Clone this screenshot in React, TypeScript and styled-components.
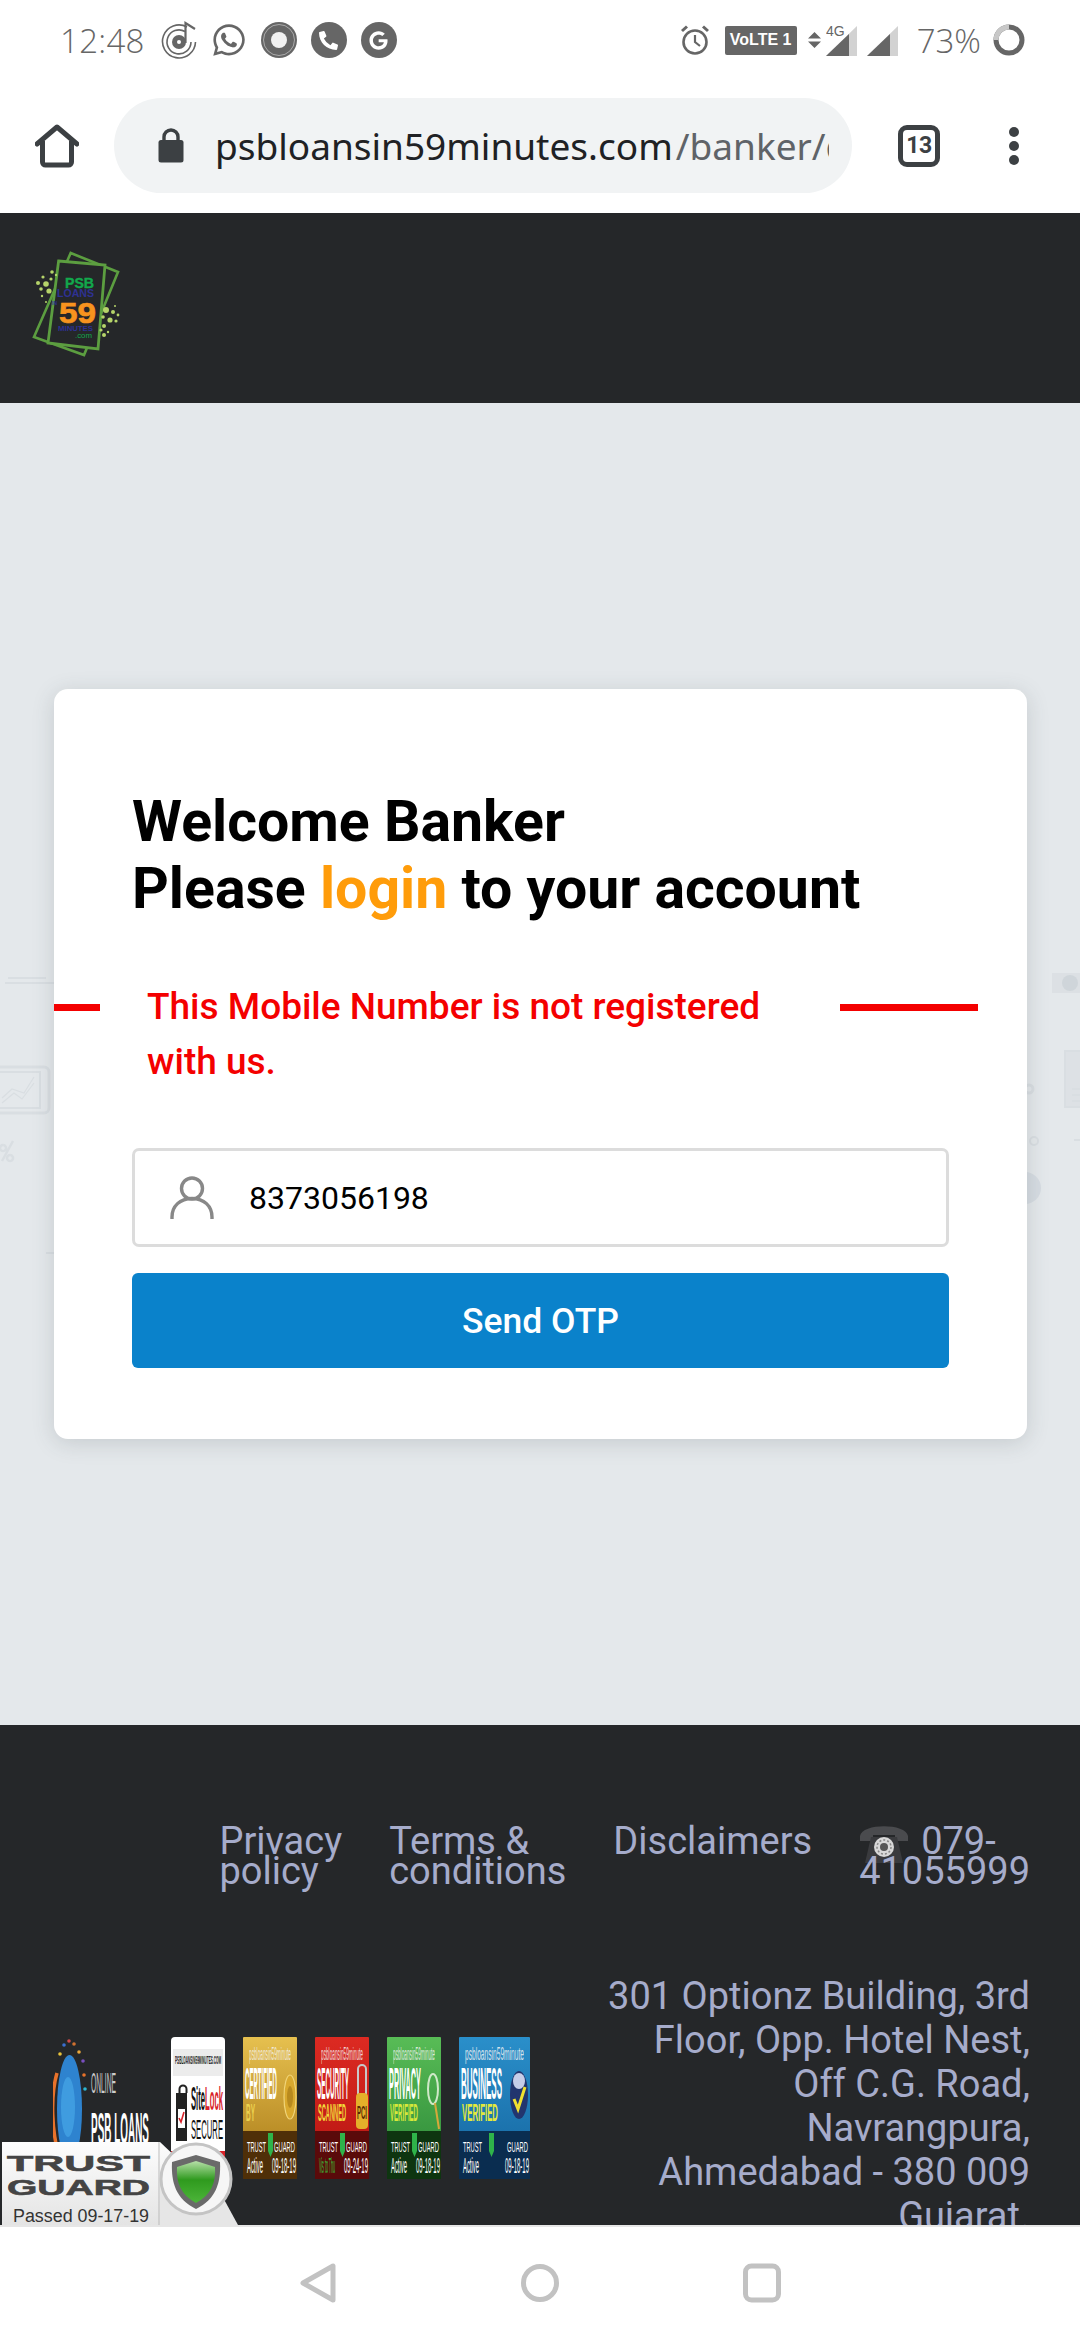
import React from 'react';
import styled, { createGlobalStyle } from 'styled-components';
import { FaWhatsapp, FaPhoneAlt, FaGoogle } from 'react-icons/fa';

const GlobalStyle = createGlobalStyle`
  html, body {
    margin: 0;
    padding: 0;
    width: 1080px;
    height: 2340px;
    overflow: hidden;
    background: #fff;
    font-family: Roboto, sans-serif;
  }
`;

const Page = styled.div`
  display: flex;
  flex-direction: column;
  width: 1080px;
  height: 2340px;
  overflow: hidden;
`;

// android status bar
const StatusBar = styled.div`
  display: flex;
  align-items: center;
  justify-content: space-between;
  height: 80px;
  padding: 0 55px 0 60px;
  color: #666;
`;

const StatusGroup = styled.div`
  display: flex;
  align-items: center;
`;

const Clock = styled.span`
  font-family: 'Open Sans', sans-serif;
  font-size: 33px;
  font-weight: 300;
  margin-right: 16px;
  letter-spacing: 0.3px;
`;

const Battery = styled.span`
  font-family: 'Open Sans', sans-serif;
  font-size: 33px;
  font-weight: 300;
  margin: 0 12px 0 18px;
`;

const NotifyIcon = styled.div`
  display: flex;
  align-items: center;
  justify-content: center;
  width: 36px;
  height: 36px;
  margin-right: 14px;
`;

const NotifyDisc = styled(NotifyIcon)`
  border-radius: 50%;
  background: #666;
  color: #fff;
`;

const VolteTag = styled.div`
  display: flex;
  align-items: center;
  justify-content: center;
  width: 72px;
  height: 29px;
  margin: 0 11px 0 15px;
  border-radius: 2px;
  background: #666;
  color: #fff;
  font-family: 'Liberation Sans', sans-serif;
  font-size: 16px;
  font-weight: 700;
  white-space: nowrap;
`;

const ArrowSlot = styled.div`
  display: flex;
  margin-right: 5px;
`;

const SignalGap = styled.span`
  width: 9px;
`;

const Toolbar = styled.div`
  display: flex;
  align-items: center;
  height: 133px;
  padding-bottom: 2px;
  box-sizing: border-box;
`;

const HomeSlot = styled.div`
  display: flex;
  justify-content: center;
  width: 114px;
`;

const Omnibox = styled.div`
  display: flex;
  align-items: center;
  width: 738px;
  height: 95px;
  padding-left: 44px;
  box-sizing: border-box;
  border-radius: 48px;
  background: #f1f3f4;
`;

const UrlText = styled.div`
  width: 614px;
  margin-left: 31px;
  overflow: hidden;
  white-space: nowrap;
  font-family: 'Noto Sans', sans-serif;
  font-size: 37px;
  color: #202124;
`;

const UrlPath = styled.span`
  padding-left: 3px;
  color: #5f6368;
`;

const TabCount = styled.div`
  display: flex;
  align-items: center;
  justify-content: center;
  width: 42px;
  height: 42px;
  margin-left: 46px;
  box-sizing: border-box;
  border: 5px solid #3c4043;
  border-radius: 9px;
  color: #3c4043;
  font-family: Roboto, sans-serif;
  font-size: 23px;
  font-weight: 700;
  letter-spacing: -0.5px;
`;

const MenuDots = styled.div`
  display: flex;
  flex-direction: column;
  gap: 4px;
  margin-left: 69px;
`;

const MenuDot = styled.span`
  width: 10px;
  height: 10px;
  border-radius: 50%;
  background: #3c4043;
`;

const SiteHeader = styled.header`
  height: 190px;
  padding: 37px 0 0 32px;
  box-sizing: border-box;
  background: #252729;
`;

const Main = styled.main`
  position: relative;
  display: flex;
  align-items: center;
  height: 1322px;
  background: #e4e8eb;
`;

const Watermark = styled.svg`
  position: absolute;
  top: 0;
  left: 0;
`;

const Card = styled.section`
  position: relative;
  width: 973px;
  height: 750px;
  margin-left: 54px;
  padding-top: 99px;
  box-sizing: border-box;
  border-radius: 14px;
  background: #fff;
  box-shadow: 0 4px 22px rgba(60, 70, 80, 0.18);
`;

const Heading = styled.h1`
  margin: 0 0 0 78px;
  color: #000;
  font-family: Roboto, sans-serif;
  font-size: 57.2px;
  font-weight: 700;
  line-height: 67px;
  letter-spacing: 0;
`;

const Accent = styled.span`
  color: #ff9c0a;
`;

const ErrorRow = styled.div`
  display: flex;
  align-items: flex-start;
  margin-top: 57px;
`;

const ErrorDash = styled.span<{ $width: number }>`
  flex: none;
  width: ${props => props.$width}px;
  height: 7px;
  margin-top: 25px;
  background: #f40000;
`;

const ErrorText = styled.div`
  flex: none;
  width: 740px;
  padding: 0 47px;
  box-sizing: border-box;
  color: #f40000;
  font-size: 37px;
  font-weight: 500;
  line-height: 55px;
`;

const FieldBox = styled.div`
  display: flex;
  align-items: center;
  height: 99px;
  margin: 59px 78px 0;
  padding-left: 35px;
  box-sizing: border-box;
  border: 3px solid #dcdcdc;
  border-radius: 7px;
`;

const FieldValue = styled.span`
  margin-left: 35px;
  color: #000;
  font-size: 32px;
`;

const SendButton = styled.button`
  display: block;
  width: 817px;
  height: 95px;
  margin: 26px 78px 0;
  border: 0;
  border-radius: 6px;
  background: #0a82cb;
  color: #fff;
  font-family: Roboto, sans-serif;
  font-size: 35.5px;
  font-weight: 500;
`;

const Footer = styled.footer`
  position: relative;
  height: 500px;
  padding: 101px 50px 0 53px;
  box-sizing: border-box;
  overflow: hidden;
  background: #252729;
  color: #a6accb;
  font-size: 38px;
`;

const FooterLinks = styled.nav`
  display: flex;
  justify-content: flex-end;
  gap: 47px;
`;

const FooterLink = styled.div`
  line-height: 30px;
  white-space: nowrap;
`;

const PhoneIcon = styled.svg`
  display: inline-block;
  vertical-align: 4px;
  margin: -20px 12px -14px 0;
`;

const FooterBottom = styled.div`
  display: flex;
  justify-content: space-between;
  align-items: flex-start;
  margin-top: 88px;
`;

const BadgeRow = styled.div`
  display: flex;
  align-items: flex-start;
  gap: 18px;
  margin-top: 63px;
`;

const Address = styled.address`
  width: 425px;
  font-style: normal;
  line-height: 44px;
  text-align: right;
`;

const TrustSeal = styled.svg`
  position: absolute;
  left: 0;
  bottom: 0;
`;

const NavBar = styled.div`
  display: flex;
  align-items: center;
  justify-content: center;
  gap: 0;
  height: 115px;
  padding-bottom: 2px;
  box-sizing: border-box;
  border-top: 2px solid #e6e6e6;
  background: #fff;
`;

const NavSlot = styled.div`
  display: flex;
  justify-content: center;
  width: 222px;
`;

const MusicIcon = () => (
  <svg width="36" height="38" viewBox="0 0 36 38" fill="none" stroke="#666">
    <path d="M26 6 A16.5 16.5 0 1 0 34.5 21" strokeWidth="1.6" />
    <path d="M24 10.5 A12 12 0 1 0 30 21" strokeWidth="1.6" />
    <circle cx="18" cy="21" r="7" fill="#666" stroke="none" />
    <circle cx="18" cy="21" r="2" fill="#fff" stroke="none" />
    <path d="M24.5 22 V2 L34 8" strokeWidth="2.2" />
  </svg>
);

const RingIcon = () => (
  <svg width="36" height="36" viewBox="0 0 36 36">
    <circle cx="18" cy="18" r="18" fill="#666" />
    <circle cx="18" cy="18" r="15.5" fill="none" stroke="#bbb" strokeWidth="0.8" />
    <circle cx="18" cy="18" r="8" fill="#f1f1f1" />
  </svg>
);

const AlarmIcon = () => (
  <svg width="30" height="32" viewBox="0 0 30 32" fill="none" stroke="#666" strokeWidth="2.6">
    <circle cx="15" cy="18" r="11.5" />
    <path d="M15 11 V18 L20 22" strokeWidth="2.2" />
    <path d="M2 7 L7 2.5 M28 7 L23 2.5" strokeWidth="3" />
  </svg>
);

const DataArrows = () => (
  <svg width="13" height="16" viewBox="0 0 13 16" fill="#666">
    <path d="M6.5 0 L13 6.5 H0 Z M0 9.5 H13 L6.5 16 Z" />
  </svg>
);

const SignalIcon = ({ label }: { label?: boolean }) => (
  <svg width="32" height="34" viewBox="0 0 32 34">
    <path d="M0 33 L31 3 V33 Z" fill="#d2d2d2" />
    <path d="M0 33 L23 11 V33 Z" fill="#666" />
    {label && (
      <text x="0" y="13" fontFamily="Liberation Sans, sans-serif" fontSize="14" fill="#666">
        4G
      </text>
    )}
  </svg>
);

const BatteryRing = () => (
  <svg width="32" height="32" viewBox="0 0 32 32" fill="none" strokeWidth="5">
    <circle cx="16" cy="16" r="13" stroke="#666" />
    <path d="M3 16 A13 13 0 0 1 16 3" stroke="#c8c8c8" />
  </svg>
);

const HomeIcon = () => (
  <svg width="44" height="44" viewBox="0 0 44 44" fill="none" stroke="#3c4043" strokeWidth="5">
    <path d="M2 20 L22 3 L42 20" strokeLinejoin="round" strokeLinecap="round" />
    <path d="M7.5 17 V38 a3 3 0 0 0 3 3 H33.5 a3 3 0 0 0 3 -3 V17" />
  </svg>
);

const LockIcon = () => (
  <svg width="26" height="35" viewBox="0 0 26 35">
    <path d="M6 14 V9 a7 7 0 0 1 14 0 V14" fill="none" stroke="#3c4043" strokeWidth="3.4" />
    <rect x="0.5" y="12" width="25" height="22.5" rx="2.5" fill="#3c4043" />
  </svg>
);

const UserIcon = () => (
  <svg width="44" height="43" viewBox="0 0 44 43" fill="none" stroke="#888" strokeWidth="3.4">
    <circle cx="22" cy="12.5" r="10.5" />
    <path d="M2 43 V41 C2 30 10 22.5 22 22.5 C34 22.5 42 30 42 41 V43" />
  </svg>
);

const LogoMark = () => {
  const dots = [
    [6, 33, 2], [11, 27, 1.6], [14, 34, 2.8], [19, 29, 1.6], [9, 39, 1.8], [17, 41, 2.6], [20, 22, 1.8], [24, 25, 1.2],
    [10, 46, 1.2], [14, 52, 1], [74, 60, 3], [81, 62, 2], [86, 65, 1.4], [71, 67, 1.8], [78, 70, 2.6], [84, 71, 1.6],
    [72, 76, 2], [76, 82, 1.2], [69, 80, 1.6], [83, 56, 1], [72, 85, 2],
  ];
  return (
    <svg width="90" height="110" viewBox="0 0 90 110">
      <path d="M38.7 3 L86 22 L52 105 L2 87 Z" fill="none" stroke="#5c9e40" strokeWidth="2.6" />
      <path d="M26.6 11 L73 15 L66 99 L16 93 Z" fill="#252729" stroke="#5c9e40" strokeWidth="2.8" />
      {dots.map(([x, y, r]) => (
        <circle key={`${x}-${y}`} cx={x} cy={y} r={r} fill="#b6d46a" />
      ))}
      <g fontFamily="Liberation Sans, sans-serif" fontWeight="700">
        <text x="33" y="37.5" fontSize="15" fill="#12a84c" stroke="#12a84c" strokeWidth="0.4" textLength="29" lengthAdjust="spacingAndGlyphs">PSB</text>
        <text x="25" y="47" fontSize="11" fill="#2e3192" textLength="37" lengthAdjust="spacingAndGlyphs">LOANS</text>
        <text x="20" y="55" fontSize="5" fill="#2e3192">IN</text>
        <text x="27" y="72.5" fontSize="30" fill="#f7931e" stroke="#f7931e" strokeWidth="0.7" textLength="37" lengthAdjust="spacingAndGlyphs">59</text>
        <text x="26" y="80.5" fontSize="7" fill="#2e3192" textLength="35" lengthAdjust="spacingAndGlyphs">MINUTES</text>
        <text x="43" y="87.5" fontSize="8" fontWeight="400" fill="#12a84c" textLength="17" lengthAdjust="spacingAndGlyphs">.com</text>
      </g>
    </svg>
  );
};

const TelephoneIcon = () => (
  <PhoneIcon width="50" height="42" viewBox="0 0 50 42">
    <path d="M1 14 C3 1 47 1 49 14 V19 H36 V13 H14 V19 H1 Z" fill="#4a4b4e" />
    <path d="M12 15 H38 L44 41 H6 Z" fill="#3a3b3e" />
    <circle cx="25" cy="25" r="10" fill="#d8d8d8" />
    <circle cx="25" cy="25" r="4" fill="#555" />
    <circle cx="25" cy="25" r="7" fill="none" stroke="#888" strokeWidth="1.5" strokeDasharray="2 2" />
  </PhoneIcon>
);

const PsbLoansMark = () => (
  <svg width="100" height="142" viewBox="0 0 100 142">
    <path d="M4 36 C-3 60 -1 95 6 120" fill="none" stroke="#e8722a" strokeWidth="3.5" />
    <ellipse cx="16.5" cy="72" rx="12.5" ry="54" fill="#2e83cf" />
    <ellipse cx="15" cy="70" rx="7" ry="30" fill="#3f9ce0" />
    <circle cx="7" cy="17" r="1.8" fill="#e9c23a" />
    <circle cx="11" cy="8" r="1.8" fill="#3a6fd0" />
    <circle cx="16" cy="4" r="1.8" fill="#d04a4a" />
    <circle cx="21" cy="7" r="1.8" fill="#d07030" />
    <circle cx="26" cy="15" r="1.8" fill="#e9a63a" />
    <circle cx="30" cy="24" r="1.8" fill="#7a4fc0" />
    <circle cx="32" cy="52" r="1.8" fill="#2eb6d0" />
    <circle cx="31" cy="38" r="1.8" fill="#e8722a" />
    <g fontFamily="Liberation Sans, sans-serif" fill="#fff">
      <text x="38" y="56" fontSize="30" fill="#ccc" textLength="25" lengthAdjust="spacingAndGlyphs">ONLINE</text>
      <text x="38" y="107" fontSize="44" fontWeight="700" textLength="58" lengthAdjust="spacingAndGlyphs">PSB LOANS</text>
    </g>
  </svg>
);

const SiteLockBadge = () => (
  <svg width="54" height="142" viewBox="0 0 54 142">
    <path d="M0 4 a4 4 0 0 1 4 -4 H50 a4 4 0 0 1 4 4 V142 H0 Z" fill="#fff" />
    <rect x="2" y="12" width="50" height="27" fill="#ececec" />
    <g fontFamily="Liberation Sans, sans-serif">
      <text x="4" y="27" fontSize="10" fontWeight="700" fill="#222" textLength="46" lengthAdjust="spacingAndGlyphs">PSBLOANSIN59MINUTES.COM</text>
      <text x="20" y="73" fontSize="34" fontWeight="700" fill="#111" textLength="14" lengthAdjust="spacingAndGlyphs">Site</text>
      <text x="34" y="73" fontSize="34" fontWeight="700" fill="#d8232a" textLength="18" lengthAdjust="spacingAndGlyphs">Lock</text>
      <text x="20" y="102" fontSize="28" fill="#111" textLength="32" lengthAdjust="spacingAndGlyphs">SECURE</text>
    </g>
    <path d="M8.5 56 V52 a3 3 0 0 1 7 0 V56" fill="none" stroke="#222" strokeWidth="2" />
    <rect x="5" y="56" width="11" height="48" fill="#222" />
    <rect x="7" y="72" width="7" height="19" fill="#fff" />
    <path d="M8 81 L10 85 L13 75" fill="none" stroke="#d8232a" strokeWidth="1.6" />
    <rect x="0" y="114" width="54" height="28" fill="#d8232a" />
  </svg>
);

type BadgeInfo = {
  id: string;
  width: number;
  title: string;
  sub: string;
  date: string;
  status: string;
  statusColor: string;
  top: string;
  bottom: string;
  dark: string;
  subColor: string;
  emblem: 'seal' | 'lock' | 'lens' | 'globe';
};

const BADGES: BadgeInfo[] = [
  { id: 'gold', width: 54, title: 'CERTIFIED', sub: 'BY', date: '09-18-19', status: 'Active', statusColor: '#fff', top: '#e6c04f', bottom: '#a67614', dark: '#4f2f08', subColor: '#ecd24e', emblem: 'seal' },
  { id: 'red', width: 54, title: 'SECURITY', sub: 'SCANNED', date: '09-24-19', status: 'Vis to Thu', statusColor: '#37c23d', top: '#dc2a22', bottom: '#b51410', dark: '#5a0a0a', subColor: '#f2d83a', emblem: 'lock' },
  { id: 'green', width: 54, title: 'PRIVACY', sub: 'VERIFIED', date: '09-18-19', status: 'Active', statusColor: '#fff', top: '#58bc56', bottom: '#2a8636', dark: '#0e3510', subColor: '#d8e83a', emblem: 'lens' },
  { id: 'blue', width: 71, title: 'BUSINESS', sub: 'VERIFIED', date: '09-18-19', status: 'Active', statusColor: '#fff', top: '#2a8fca', bottom: '#14649e', dark: '#0a2d50', subColor: '#e4ea3a', emblem: 'globe' },
];

const BadgeEmblem = ({ kind, w }: { kind: BadgeInfo['emblem']; w: number }) => {
  const cx = w - 7;
  if (kind === 'seal') {
    return (
      <g>
        <ellipse cx={cx} cy="60" rx="6" ry="22" fill="#d9a92e" stroke="#f0d478" strokeWidth="1.2" />
        <ellipse cx={cx} cy="60" rx="3" ry="11" fill="#b88a1e" />
      </g>
    );
  }
  if (kind === 'lock') {
    return (
      <g>
        <path d={`M${cx - 4} 62 V32 a4 4 0 0 1 8 0 V62`} fill="none" stroke="#c8c8c8" strokeWidth="2" />
        <rect x={cx - 6} y="56" width="12" height="36" rx="4" fill="#e4b02a" />
        <text x={cx - 5} y="82" fontFamily="Liberation Sans, sans-serif" fontSize="18" fontWeight="700" fill="#5a2a05" textLength="10" lengthAdjust="spacingAndGlyphs">PCI</text>
      </g>
    );
  }
  if (kind === 'lens') {
    return (
      <g fill="none">
        <ellipse cx={cx - 1} cy="52" rx="5" ry="15" stroke="#cfe8c8" strokeWidth="2" />
        <path d={`M${cx + 1} 66 L${cx + 5} 92`} stroke="#d6a83a" strokeWidth="2" />
      </g>
    );
  }
  return (
    <g>
      <ellipse cx={cx - 4} cy="58" rx="9" ry="24" fill="#22356e" />
      <ellipse cx={cx - 4} cy="44" rx="6" ry="8" fill="#c5cde8" />
      <path d={`M${cx - 9} 62 L${cx - 5} 72 L${cx + 2} 50`} fill="none" stroke="#f0e030" strokeWidth="3" />
    </g>
  );
};

const TrustBadge = ({ info }: { info: BadgeInfo }) => {
  const w = info.width;
  return (
    <svg width={w} height="142" viewBox={`0 0 ${w} 142`}>
      <defs>
        <linearGradient id={`badge-${info.id}`} x1="0" y1="0" x2="0" y2="1">
          <stop offset="0" stopColor={info.top} />
          <stop offset="1" stopColor={info.bottom} />
        </linearGradient>
      </defs>
      <rect width={w} height="142" rx="1" fill={`url(#badge-${info.id})`} />
      <rect y="94" width={w} height="48" fill={info.dark} />
      <BadgeEmblem kind={info.emblem} w={w} />
      <g fontFamily="Liberation Sans, sans-serif" fill="#fff">
        <text x="6" y="23" fontSize="18" fill="#f4f4f4" opacity="0.85" textLength={w - 12} lengthAdjust="spacingAndGlyphs">psbloansin59minute</text>
        <text x="2" y="62" fontSize="44" fontWeight="700" textLength={w > 54 ? 41 : 32} lengthAdjust="spacingAndGlyphs">{info.title}</text>
        <text x="3" y="84" fontSize="24" fontWeight="700" fill={info.subColor} textLength={info.sub === 'BY' ? 9 : w > 54 ? 36 : 28} lengthAdjust="spacingAndGlyphs">{info.sub}</text>
        <text x="4" y="115" fontSize="14" textLength="19" lengthAdjust="spacingAndGlyphs">TRUST</text>
        <text x={w - 23} y="115" fontSize="14" textLength="21" lengthAdjust="spacingAndGlyphs">GUARD</text>
        <text x="4" y="136" fontSize="22" fill={info.statusColor} textLength="16" lengthAdjust="spacingAndGlyphs">{info.status}</text>
        <text x={w - 25} y="136" fontSize="22" textLength="24" lengthAdjust="spacingAndGlyphs">{info.date}</text>
      </g>
      <path d={`M${w > 54 ? 30 : 25} 96 h5 v18 l-2.5 6 l-2.5 -6 Z`} fill="#2fb34a" />
    </svg>
  );
};

const TrustGuardSeal = () => (
  <TrustSeal width="240" height="84" viewBox="0 0 240 84">
    <defs>
      <linearGradient id="seal-panel" x1="0" y1="0" x2="0" y2="1">
        <stop offset="0" stopColor="#fdfdfd" />
        <stop offset="1" stopColor="#e4e4e4" />
      </linearGradient>
      <linearGradient id="seal-shield" x1="0" y1="0" x2="0" y2="1">
        <stop offset="0" stopColor="#b6dfa8" />
        <stop offset="0.45" stopColor="#2f9a1e" />
        <stop offset="1" stopColor="#4db53a" />
      </linearGradient>
    </defs>
    <path d="M2 1 H160 L180 20 V84 H2 Z" fill="url(#seal-panel)" />
    <path d="M160 40 H214 L238 84 H160 Z" fill="#e6e6e6" />
    <path d="M159 1 V84" stroke="#bbb" strokeWidth="1" />
    <circle cx="196" cy="38" r="35" fill="#f6f6f6" stroke="#c4c4c4" strokeWidth="3" />
    <path d="M196 14 L172 21 C171 42 176 58 196 68 C216 58 221 42 220 21 Z" fill="#6a6a6a" />
    <path d="M196 20 L177 26 C176 42 181 54 196 62 C211 54 216 42 215 26 Z" fill="url(#seal-shield)" />
    <g fontFamily="Liberation Sans, sans-serif" fontWeight="700" fill="#444">
      <text x="7" y="30" fontSize="22" stroke="#444" strokeWidth="0.6" textLength="143" lengthAdjust="spacingAndGlyphs">TRUST</text>
      <text x="7" y="54" fontSize="22" stroke="#444" strokeWidth="0.6" textLength="143" lengthAdjust="spacingAndGlyphs">GUARD</text>
    </g>
    <text x="13" y="81" fontFamily="Liberation Sans, sans-serif" fontSize="18" fill="#333" textLength="136" lengthAdjust="spacingAndGlyphs">Passed 09-17-19</text>
  </TrustSeal>
);

const BackgroundArt = () => (
  <Watermark width="1080" height="1322" viewBox="0 0 1080 1322" fill="none" stroke="#d9dee2" strokeWidth="2">
    <path d="M8 575 H46 M5 580 H54 M46 850 H54 M1074 737 H1080" />
    <rect x="-20" y="664" width="69" height="46" rx="5" strokeWidth="3" />
    <rect x="-10" y="669" width="50" height="36" />
    <path d="M2 700 L14 690 L22 696 L34 680 M2 695 L12 686 L24 690 L34 674" strokeWidth="1.2" />
    <path d="M2 758 L13 738 M3 742 a3 3 0 1 0 .1 0 M10 752 a3 3 0 1 0 .1 0" strokeWidth="2.5" />
    <rect x="1053" y="571" width="40" height="18" fill="#d9dee2" opacity="0.7" />
    <circle cx="1070" cy="580" r="8" fill="#cfd5da" stroke="none" />
    <rect x="1065" y="648" width="30" height="56" fill="#dde1e5" />
    <path d="M1072 686 H1080 M1072 692 H1080 M1072 698 H1080" />
    <circle cx="1034" cy="738" r="4" />
    <circle cx="1029" cy="686" r="4" strokeWidth="3" />
    <circle cx="1025" cy="785" r="16" fill="#d6dce2" stroke="none" />
  </Watermark>
);

const BackIcon = () => (
  <svg width="36" height="40" viewBox="0 0 36 40" fill="none" stroke="#c2c2c2" strokeWidth="5" strokeLinejoin="round">
    <path d="M3 20 L33 3 V37 Z" />
  </svg>
);

const CircleIcon = () => (
  <svg width="38" height="40" viewBox="0 0 38 40" fill="none" stroke="#c2c2c2" strokeWidth="5">
    <circle cx="19" cy="20" r="16.5" />
  </svg>
);

const SquareIcon = () => (
  <svg width="38" height="40" viewBox="0 0 38 40" fill="none" stroke="#c2c2c2" strokeWidth="5">
    <rect x="2.5" y="3" width="33" height="34" rx="6" />
  </svg>
);

export default function App() {
  return (
    <Page>
      <GlobalStyle />
      <StatusBar>
        <StatusGroup>
          <Clock>12:48</Clock>
          <NotifyIcon><MusicIcon /></NotifyIcon>
          <NotifyIcon><FaWhatsapp size={36} color="#666" /></NotifyIcon>
          <NotifyIcon><RingIcon /></NotifyIcon>
          <NotifyDisc><FaPhoneAlt size={19} /></NotifyDisc>
          <NotifyDisc><FaGoogle size={19} /></NotifyDisc>
        </StatusGroup>
        <StatusGroup>
          <AlarmIcon />
          <VolteTag>VoLTE 1</VolteTag>
          <ArrowSlot><DataArrows /></ArrowSlot>
          <SignalIcon label />
          <SignalGap />
          <SignalIcon />
          <Battery>73%</Battery>
          <BatteryRing />
        </StatusGroup>
      </StatusBar>
      <Toolbar>
        <HomeSlot><HomeIcon /></HomeSlot>
        <Omnibox>
          <LockIcon />
          <UrlText>
            psbloansin59minutes.com<UrlPath>/banker/d</UrlPath>
          </UrlText>
        </Omnibox>
        <TabCount>13</TabCount>
        <MenuDots>
          <MenuDot />
          <MenuDot />
          <MenuDot />
        </MenuDots>
      </Toolbar>
      <SiteHeader>
        <LogoMark />
      </SiteHeader>
      <Main>
        <BackgroundArt />
        <Card>
          <Heading>
            Welcome Banker
            <br />
            Please <Accent>login</Accent> to your account
          </Heading>
          <ErrorRow>
            <ErrorDash $width={46} />
            <ErrorText>This Mobile Number is not registered with us.</ErrorText>
            <ErrorDash $width={138} />
          </ErrorRow>
          <FieldBox>
            <UserIcon />
            <FieldValue>8373056198</FieldValue>
          </FieldBox>
          <SendButton>Send OTP</SendButton>
        </Card>
      </Main>
      <Footer>
        <FooterLinks>
          <FooterLink>Privacy<br />policy</FooterLink>
          <FooterLink>Terms &amp;<br />conditions</FooterLink>
          <FooterLink>Disclaimers</FooterLink>
          <FooterLink><TelephoneIcon />079-<br />41055999</FooterLink>
        </FooterLinks>
        <FooterBottom>
          <BadgeRow>
            <PsbLoansMark />
            <SiteLockBadge />
            {BADGES.map(info => (
              <TrustBadge key={info.id} info={info} />
            ))}
          </BadgeRow>
          <Address>
            301 Optionz Building, 3rd Floor, Opp. Hotel Nest, Off C.G. Road, Navrangpura, Ahmedabad - 380 009 Gujarat.
          </Address>
        </FooterBottom>
        <TrustGuardSeal />
      </Footer>
      <NavBar>
        <NavSlot><BackIcon /></NavSlot>
        <NavSlot><CircleIcon /></NavSlot>
        <NavSlot><SquareIcon /></NavSlot>
      </NavBar>
    </Page>
  );
}
